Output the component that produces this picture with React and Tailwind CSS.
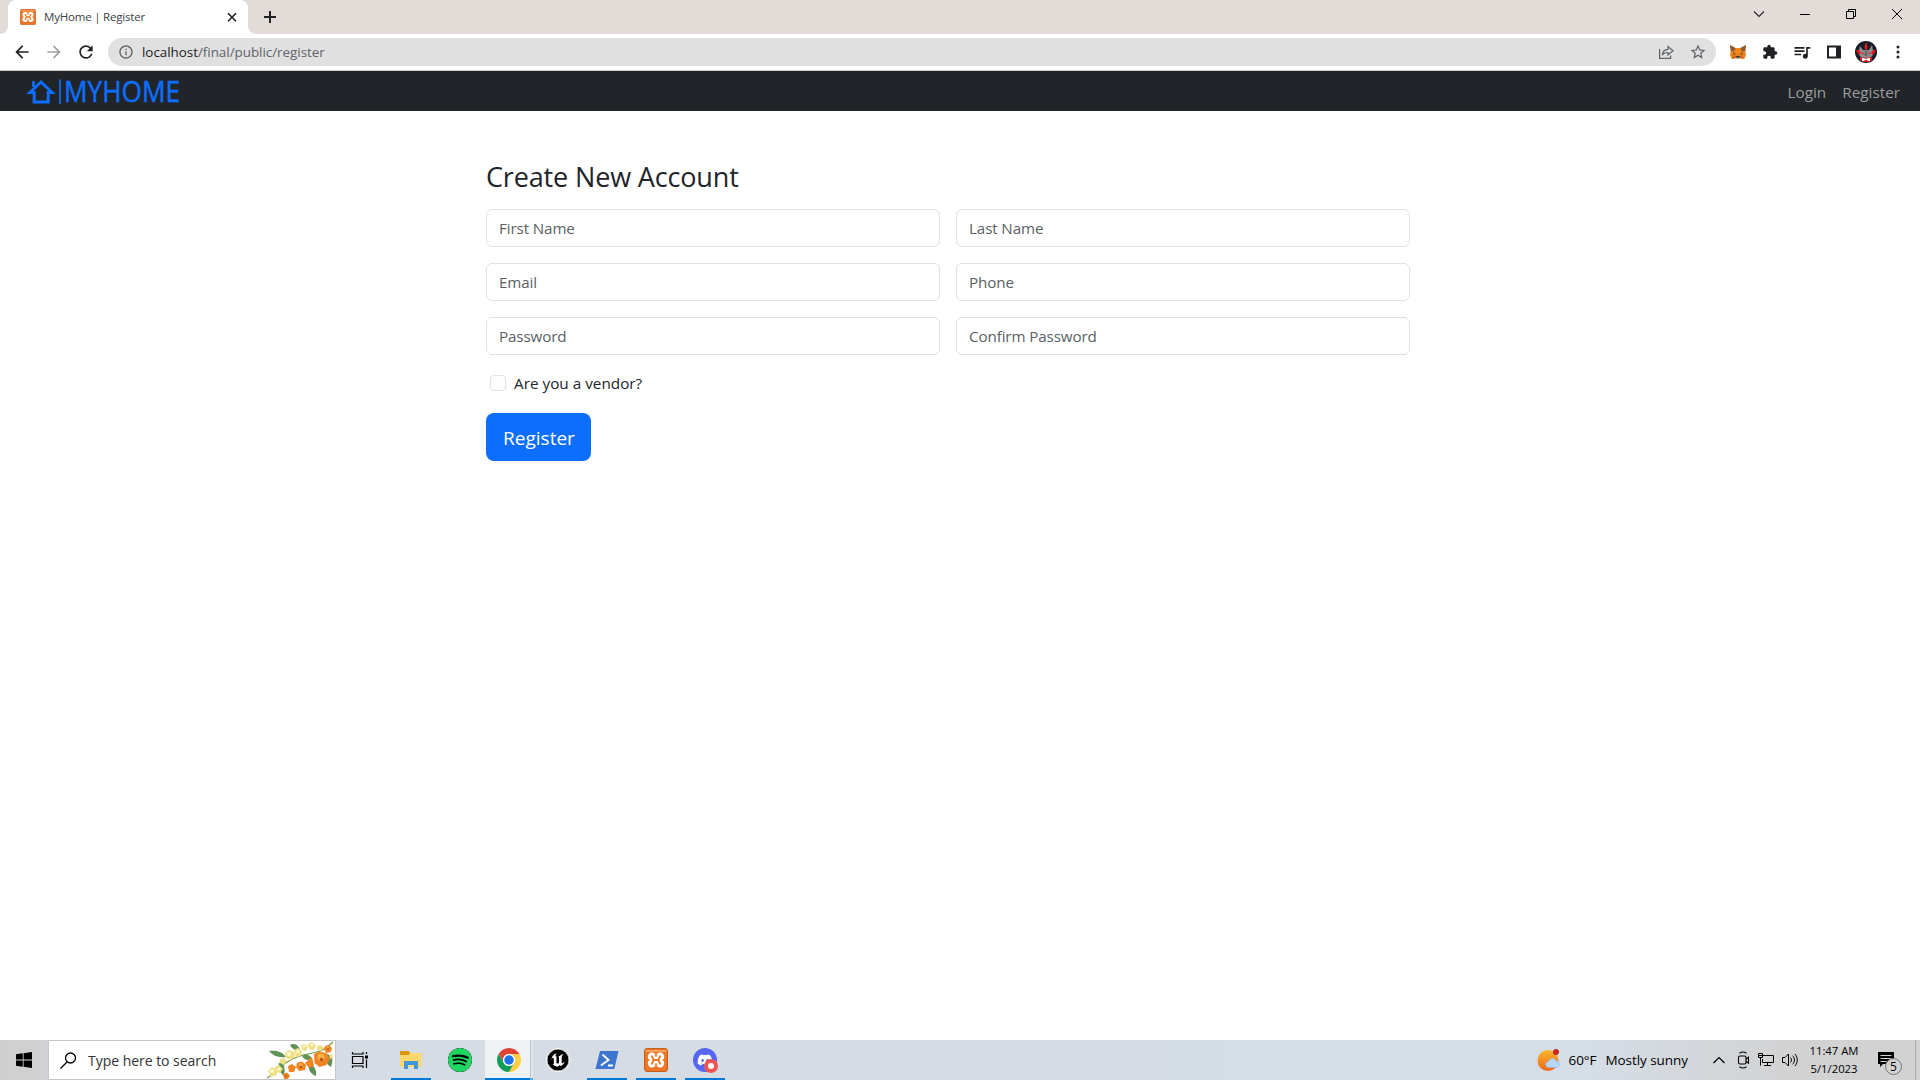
import React, { useState } from 'react';
import { MdArrowBack, MdArrowForward, MdRefresh, MdInfoOutline, MdStarBorder, MdExtension, MdQueueMusic } from 'react-icons/md';
import { FaDiscord } from 'react-icons/fa';
import { SiSpotify, SiUnrealengine } from 'react-icons/si';

const FIELDS = [
  { name: 'first_name', label: 'First Name', type: 'text' },
  { name: 'last_name', label: 'Last Name', type: 'text' },
  { name: 'email', label: 'Email', type: 'email' },
  { name: 'phone', label: 'Phone', type: 'text' },
  { name: 'password', label: 'Password', type: 'password' },
  { name: 'confirm', label: 'Confirm Password', type: 'password' },
];

function XamppIcon({ className }) {
  return (
    <svg className={className} viewBox="0 0 24 24">
      <rect x=".5" y=".5" width="23" height="23" rx="2.500" fill="#ef7623" stroke="#c65d16" />
      <path d="M1.500 2h21v1.800h-21z" fill="#f6a56b" />
      <g fill="#fff">
        <circle cx="8" cy="8.800" r="4.200" />
        <circle cx="16" cy="8.800" r="4.200" />
        <circle cx="8" cy="15.200" r="4.200" />
        <circle cx="16" cy="15.200" r="4.200" />
        <path d="M9 8.500h6v7H9z" />
      </g>
      <path
        d="M8 8.300l1.700 3.700L8 15.700M16 8.300L14.300 12l1.700 3.700M9.700 12h4.600"
        fill="none"
        stroke="#ef7623"
        strokeWidth="1.900"
        strokeLinecap="round"
      />
      <path d="M12 5l1.300 3.600h-2.600zM12 19l1.300-3.600h-2.600zM3.500 10.500L5.700 12l-2.200 1.500zM20.500 10.500L18.300 12l2.200 1.500z" fill="#ef7623" />
    </svg>
  );
}

function TabStrip() {
  return (
    <div className="h-[34px] bg-[#e3dbd8] flex items-end pl-2 shrink-0">
      <div className="relative w-[240px] h-[34px] bg-white rounded-t-lg flex items-center pl-3 pr-2">
        <svg className="absolute -left-2 bottom-0" width="8" height="8">
          <path d="M8 0v8H0a8 8 0 0 0 8-8z" fill="#fff" />
        </svg>
        <svg className="absolute -right-2 bottom-0" width="8" height="8">
          <path d="M0 0v8h8a8 8 0 0 1-8-8z" fill="#fff" />
        </svg>
        <XamppIcon className="w-4 h-4" />
        <span className="ml-2 text-[11.5px] tracking-[-0.2px] text-[#3c4043] whitespace-nowrap">MyHome | Register</span>
        <svg className="ml-auto" width="16" height="16" viewBox="0 0 16 16" stroke="#202124" strokeWidth="1.6">
          <path d="M4 4.200l8 8M12 4.200l-8 8" />
        </svg>
      </div>
      <svg className="ml-[14px] self-center" width="16" height="16" viewBox="0 0 16 16" stroke="#202124" strokeWidth="2">
        <path d="M8 2v12M2 8h12" />
      </svg>
      <div className="ml-auto self-start h-7 flex text-black">
        <svg width="46" height="28" fill="none" stroke="#222" strokeWidth="1.1">
          <path d="M18 11.500l5 5 5-5" />
        </svg>
        <svg width="46" height="28" fill="none" stroke="#000" strokeWidth="1">
          <path d="M18 14.500h10" />
        </svg>
        <svg width="46" height="28" fill="none" stroke="#000" strokeWidth="1">
          <path d="M18.500 11.500h7v7h-7zM20.500 11.500v-2h7v7h-2" />
        </svg>
        <svg width="46" height="28" fill="none" stroke="#000" strokeWidth="1">
          <path d="M18 9l10 10M28 9l-10 10" />
        </svg>
      </div>
    </div>
  );
}

function FoxIcon() {
  return (
    <svg width="16" height="16" viewBox="0 0 16 16">
      <path d="M0 1l5.500 3h5L16 1l-.8 6 .8 4-1.800 4-4-.8-1 .8H6.800l-1-.8-4 .8L0 11l.8-4z" fill="#e8821e" />
      <path d="M0 1l5.500 3L4 7.500.8 7zM16 1l-5.500 3L12 7.500l3.200-.5z" fill="#8e5a34" />
      <path d="M5.500 4h5l-1 6h-3z" fill="#f6851b" />
      <path d="M3 8.500l3 1.500-2.500.8zM13 8.500L10 10l2.500.8z" fill="#6b4a2f" />
      <path d="M1.500 14.500L5 11l1.500 3zM14.500 14.500L11 11l-1.500 3z" fill="#cd6116" />
      <path d="M6.200 12h3.600l-.3 1.700h-3z" fill="#233447" />
      <path d="M6.300 13.700h3.400l-.5 1.300H6.800z" fill="#c0ad9e" />
    </svg>
  );
}

function Avatar() {
  return (
    <svg width="22" height="22" viewBox="0 0 22 22">
      <circle cx="11" cy="11" r="11" fill="#171d28" />
      <path d="M1 9l4 0 2 3-1 3-3-2zM21 9l-4 0-2 3 1 3 3-2z" fill="#e8141b" />
      <path d="M5 5l3 4h6l3-5 1 5-2 3 2 2-3 3H7l-3-3 2-2-2-3z" fill="#8d8c8d" />
      <path d="M11 1l1.500 5-.8 3h-1.400L9.500 6z" fill="#f01820" />
      <path d="M6.500 11l3 1.500-2 .8zM15.500 11l-3 1.500 2 .8z" fill="#f01820" />
      <path d="M10.300 9h1.400l.8 6H9.500z" fill="#656467" />
      <path d="M5 16l2 .5h8l2-.5v3l-3 2H8l-3-2z" fill="#df171c" />
      <path d="M7 17h2l1 .8h2l1-.8h2v3h-2l-1-1h-2l-1 1H7z" fill="#fff" />
    </svg>
  );
}

function Toolbar() {
  return (
    <div className="h-[37px] bg-white border-b border-[#c9c9c7] flex items-center pl-3 pr-3 shrink-0">
      <MdArrowBack className="w-5 h-5 text-[#202124]" />
      <MdArrowForward className="ml-3 w-5 h-5 text-[#a0a1a3]" />
      <MdRefresh className="ml-3 w-5 h-5 text-[#202124]" />
      <div className="ml-3 w-[1608px] h-7 rounded-full bg-[#e0e0e0] flex items-center pl-[10px] pr-[9px]">
        <MdInfoOutline className="w-4 h-4 text-[#5f6368]" />
        <span className="ml-2 text-[13.4px] tracking-[-0.02px] text-[#5f6368] whitespace-nowrap">
          <span className="text-[#202124]">localhost</span>/final/public/register
        </span>
        <svg className="ml-auto" width="16" height="16" viewBox="0 0 16 16" fill="none" stroke="#5f6368" strokeWidth="1.2">
          <path d="M1.600 5v9.400h11V11.500" />
          <path d="M4.500 10.500c.3-3.500 2.300-5 5.500-5.200V2.500l5 4.300-5 4.200V8.500c-2.400 0-4 .5-5.500 2z" />
        </svg>
        <MdStarBorder className="ml-[15px] w-[18px] h-[18px] text-[#5f6368]" />
      </div>
      <div className="ml-auto flex items-center gap-4 text-[#202124]">
        <FoxIcon />
        <MdExtension className="w-4 h-4" />
        <MdQueueMusic className="-mx-[2px] w-5 h-5" />
        <svg width="16" height="16" viewBox="0 0 16 16">
          <path d="M1 1.500h14v13H1zM3 3.500v9h7v-9z" fill="#202124" fillRule="evenodd" />
        </svg>
        <div className="-mx-[3px]">
          <Avatar />
        </div>
        <svg className="mr-[2px]" width="16" height="16" fill="#202124">
          <circle cx="8" cy="3" r="1.500" />
          <circle cx="8" cy="8" r="1.500" />
          <circle cx="8" cy="13" r="1.500" />
        </svg>
      </div>
    </div>
  );
}

function Navbar() {
  return (
    <nav className="h-10 bg-[#212529] flex items-center justify-between pl-7 pr-5 shrink-0">
      <svg className="overflow-visible" width="156" height="40" viewBox="0 0 156 40" fill="none" stroke="#0d6efd">
        <path d="M2 21.500L13 11l11 10.500h-3.800V31H6.200v-9.500z" strokeWidth="3" />
        <path d="M5.500 16v-6" strokeWidth="2.800" />
        <path d="M32 8.500V33" strokeWidth="1.700" />
        <text
          x="36"
          y="31.200"
          fontSize="29"
          fill="#0d6efd"
          strokeWidth=".5"
          textLength="116"
          lengthAdjust="spacingAndGlyphs"
        >
          MYHOME
        </text>
      </svg>
      <div className="flex gap-4 text-[15.3px] leading-[22px] pt-px text-[#9b9d9e]">
        <a href="#login">Login</a>
        <a href="#register">Register</a>
      </div>
    </nav>
  );
}

function RegisterForm() {
  const [vendor, setVendor] = useState(false);

  return (
    <form className="w-[924px] ml-[486px] pt-[49px]" onSubmit={(e) => e.preventDefault()}>
      <h3 className="text-[27px] leading-[34px] tracking-[-0.15px] text-[#212529] mb-[15px]">Create New Account</h3>
      <div className="grid grid-cols-2 gap-4">
        {FIELDS.map((f) => (
          <input
            key={f.name}
            name={f.name}
            type={f.type}
            placeholder={f.label}
            className="h-[38px] rounded-md border border-[#dee2e6] px-3 text-[15.2px] tracking-[-0.12px] placeholder:text-[#595f65]"
          />
        ))}
      </div>
      <label className="mt-4 ml-1 h-6 flex items-center gap-2 text-[15.3px] text-[#212529]">
        <input
          type="checkbox"
          checked={vendor}
          onChange={(e) => setVendor(e.target.checked)}
          className="appearance-none w-4 h-4 rounded border border-[#dee2e6] checked:bg-[#0d6efd]"
        />
        Are you a vendor?
      </label>
      <button type="submit" className="mt-[18px] w-[105px] h-12 pt-[2px] pl-px rounded-lg bg-[#0d6efd] text-white text-[19px]">
        Register
      </button>
    </form>
  );
}

function Flowers() {
  return (
    <svg width="70" height="38" viewBox="0 0 70 38">
      <path d="M2 37C14 30 16 22 32 16S56 14 68 1" fill="none" stroke="#6f9a45" strokeWidth="1.200" />
      <g fill="#5f9256">
        <path d="M4 10c6-1 13 0 17 6-7 1-13-1-17-6z" />
        <path d="M25 4c5-3 9 1 10 5-5 1-8-1-10-5z" />
        <path d="M14 22c4-1 7 4 5 13-4-3-6-8-5-13z" />
        <path d="M44 24c5-1 8 5 7 11-5-2-8-6-7-11z" />
        <path d="M61 14c6-2 8 4 5 12-4-2-6-7-5-12z" />
        <path d="M37 15c5-3 9 0 10 3-4 2-8 1-10-3z" />
      </g>
      <g fill="#efdf84">
        <path d="M20 12l4-3 5 2 1 5-4 3-5-2z" />
        <path d="M29 9l4-2 4 3-1 5-5 1z" />
        <path d="M36 4l4-1 3 3-2 4-4-1z" />
        <path d="M43 3l4-2 4 3-2 5-5-1z" />
        <path d="M52 5l4-1 3 3-3 3-4-1z" />
        <path d="M15 18l4-1 3 3-3 4-4-2z" />
        <path d="M3 30l4-4 5 3 0 5-6 2z" />
        <path d="M10 26l4-2 4 4-3 4-4-1z" />
        <path d="M64 14l3-1 1 4-3 1z" />
      </g>
      <g fill="#fffad0">
        <circle cx="24" cy="13" r="2" />
        <circle cx="33" cy="10.500" r="1.700" />
        <circle cx="47" cy="4" r="1.600" />
        <circle cx="7" cy="30" r="2" />
        <circle cx="39" cy="5.500" r="1.300" />
        <circle cx="14" cy="28" r="1.400" />
      </g>
      <g fill="#f08322">
        <path d="M49 13l6-2.500 7 2 2.500 6-3 5.500-7 2-5-4z" />
        <path d="M40 22l7-6 2 9-5 2z" />
        <path d="M32 22l5-1.500 4 3.500-1 5-6 1-3-4z" />
        <path d="M60 5l4-1 3 3-1 4-5 1-2-4z" />
        <path d="M23 25l4-2 4 3-2 5-5 0z" />
        <path d="M18 33l4-1.500 3 3-2 3.500h-4z" />
      </g>
      <g fill="#f9b04a">
        <circle cx="56" cy="16" r="3.600" />
        <circle cx="36" cy="24" r="1.800" />
        <circle cx="63" cy="7" r="1.500" />
      </g>
      <g fill="#b5541a">
        <circle cx="56.500" cy="18.500" r="1.700" />
        <circle cx="36" cy="26" r="1.200" />
        <circle cx="63" cy="8" r="1" />
        <circle cx="21" cy="35" r="1" />
      </g>
    </svg>
  );
}

function FolderIcon() {
  return (
    <svg width="22" height="20" viewBox="0 0 22 20">
      <path d="M0 1h9l1 2h11v14H0z" fill="#ffcf58" />
      <path d="M0 1h9l1 2-1 2H0z" fill="#d9970f" />
      <path d="M0 5h9l2-2h10.500v14H0z" fill="#ffd76c" />
      <path d="M4 11h14v8h-4v-4H8v4H4z" fill="#3f97dd" />
    </svg>
  );
}

function ChromeIcon() {
  return (
    <svg width="24" height="24" viewBox="0 0 48 48">
      <circle cx="24" cy="24" r="24" fill="#fff" />
      <path d="M24 12h20.780A24 24 0 0 0 3.220 12l10.390 18A12 12 0 0 1 24 12z" fill="#db4437" />
      <path d="M34.390 30L24 48A24 24 0 0 0 44.780 12H24a12 12 0 0 1 10.390 18z" fill="#ffcd40" />
      <path d="M13.610 30L3.220 12A24 24 0 0 0 24 48l10.390-18a12 12 0 0 1-20.780 0z" fill="#0f9d58" />
      <circle cx="24" cy="24" r="12" fill="#fff" />
      <circle cx="24" cy="24" r="9.500" fill="#1a73e8" />
    </svg>
  );
}

function PowerShellIcon() {
  return (
    <svg width="24" height="20" viewBox="0 0 24 20">
      <path d="M5 1h18.500l-4.200 18H.5z" fill="#3d76cf" />
      <path d="M7.500 4.500l6 5.500-7.500 5.500M13 15.500h5" fill="none" stroke="#fff" strokeWidth="1.900" />
    </svg>
  );
}

const APPS = [
  { id: 'explorer', open: true, icon: <FolderIcon /> },
  {
    id: 'spotify',
    open: false,
    icon: (
      <span className="w-6 h-6 rounded-full bg-black overflow-hidden">
        <SiSpotify className="w-6 h-6 text-[#1ed760]" />
      </span>
    ),
  },
  { id: 'chrome', open: true, active: true, icon: <ChromeIcon /> },
  {
    id: 'unreal',
    open: false,
    icon: (
      <span className="w-[22px] h-[22px] rounded-full bg-black flex items-center justify-center ring-1 ring-white/70">
        <SiUnrealengine className="w-[22px] h-[22px] text-white" />
      </span>
    ),
  },
  { id: 'powershell', open: true, icon: <PowerShellIcon /> },
  { id: 'xampp', open: true, icon: <XamppIcon className="w-6 h-6" /> },
  {
    id: 'discord',
    open: true,
    icon: (
      <span className="relative w-6 h-6 rounded-full bg-[#5865f2] flex items-center justify-center">
        <FaDiscord className="w-4 h-4 text-white" />
        <span className="absolute left-[11px] top-[11px] w-[14px] h-[14px] rounded-full bg-[#ed5555] flex items-center justify-center">
          <span className="w-[6px] h-[6px] rounded-full bg-white" />
        </span>
      </span>
    ),
  },
];

function TaskbarApp({ app }) {
  if (app.active) {
    return (
      <div className="w-[49px] h-10 flex">
        <div className="w-[45px] ml-px bg-[#eff2f5] border-b-2 border-[#0078d7] flex items-center justify-center pl-[3px] pt-[2px]">
          {app.icon}
        </div>
        <div className="w-[3px] bg-[#e3e8ed] border-l border-l-[#b9c1c9] border-b-2 border-b-[#5ba4de]" />
      </div>
    );
  }
  return (
    <div className="w-[49px] h-10 flex flex-col items-center">
      <div className="h-[38px] pt-[2px] flex items-center justify-center">{app.icon}</div>
      {app.open && <div className="w-10 h-[2px] bg-[#0078d7]" />}
    </div>
  );
}

function Tray() {
  return (
    <div className="ml-auto flex items-center h-10 text-black">
      <svg width="24" height="24" viewBox="0 0 24 24">
        <defs>
          <linearGradient id="sun" x1="0" y1="0" x2="0" y2="1">
            <stop offset="0" stopColor="#f9b52c" />
            <stop offset="1" stopColor="#f0681c" />
          </linearGradient>
        </defs>
        <circle cx="11" cy="12.500" r="10.500" fill="url(#sun)" />
        <path d="M12 19.500a3 3 0 0 1-.5-6 4.200 4.200 0 0 1 7.800-.5 3.300 3.300 0 0 1 .7 6.500z" fill="#b9d6fb" stroke="#8fb7ec" strokeWidth=".5" />
        <circle cx="19" cy="4" r="3" fill="#c9281f" />
      </svg>
      <span className="ml-2 text-[13.5px] tracking-[-0.1px] whitespace-nowrap">60°F</span>
      <span className="ml-[9px] text-[13.5px] tracking-[-0.05px] whitespace-nowrap">Mostly sunny</span>
      <svg className="ml-[24px]" width="14" height="14" fill="none" stroke="#000" strokeWidth="1.200">
        <path d="M1.500 10L7 4.500l5.500 5.500" />
      </svg>
      <svg className="ml-[11px]" width="14" height="18" viewBox="0 0 14 18" fill="none" stroke="#000" strokeWidth="1.100">
        <rect x="1.500" y="5" width="7.500" height="8" rx="1.500" />
        <path d="M9 8.200l2.500-2v6l-2.500-2M2.500 2.300c2-1.500 5-1.500 7 0M2.500 15.700c2 1.500 5 1.500 7 0" />
      </svg>
      <svg className="ml-[6px]" width="18" height="16" viewBox="0 0 18 16" fill="none" stroke="#000" strokeWidth="1">
        <path d="M6 3.500h10.500v7h-11V7M10.500 10.500v3M7 13.500h7M1.500 1.500h4v4h-4zM3.500 5.500v8M1 3.500h4" />
      </svg>
      <svg className="ml-[6px]" width="18" height="16" viewBox="0 0 18 16" fill="none" stroke="#000" strokeWidth="1">
        <path d="M1.500 5.500h2.500l3.500-3.500v12L4 10.500H1.500zM9.500 5.500c1.300 1.500 1.300 3.500 0 5M11.700 3.700c2.300 2.500 2.300 6.100 0 8.600M14 2c3 3.500 3 8.500 0 12" />
      </svg>
      <div className="w-[70px] text-center text-[11.3px] leading-[18px] whitespace-nowrap">
        <div>11:47 AM</div>
        <div>5/1/2023</div>
      </div>
      <div className="relative ml-[8px] w-[38px] h-10 shrink-0">
        <svg className="absolute left-0 top-[11px]" width="18" height="18">
          <path d="M1 1h16v12H6l-3 3v-3H1z" fill="#000" />
          <path d="M3.500 4.500h11M3.500 7.500h11M3.500 10.500h6" stroke="#d2d2d2" strokeWidth="1" />
        </svg>
        <span className="absolute left-[8px] top-[18px] w-[17px] h-[17px] rounded-full border border-[#777] bg-[#d2d2d2] flex items-center justify-center text-[12px]">
          5
        </span>
      </div>
      <div className="w-[5px] h-10 border-l border-[#a8a8a8]" />
    </div>
  );
}

function Taskbar() {
  return (
    <div className="h-10 shrink-0 flex items-center bg-[linear-gradient(90deg,#cfcfcf_0%,#d1d2d4_3%,#d5dce4_18%,#d5dce3_50%,#d5dee7_82%,#d3d5d8_90%,#d2d2d2_94%)]">
      <div className="w-12 flex justify-center">
        <svg width="16" height="16" viewBox="0 0 16 16">
          <path d="M0 2.300l6.800-1v6.300H0zM7.600 1.200L16 0v7.600H7.600zM0 8.400h6.800v6.300l-6.800-1zM7.600 8.400H16V16l-8.400-1.200z" />
        </svg>
      </div>
      <div className="w-[288px] h-10 bg-white border border-[#c6c6c6] flex items-center pl-[11px]">
        <svg width="17" height="17" viewBox="0 0 17 17" fill="none" stroke="#000" strokeWidth="1.300">
          <circle cx="10.500" cy="6" r="5" />
          <path d="M7 10l-6.500 6.500" />
        </svg>
        <span className="ml-[11px] text-[14px] tracking-[-0.03px] text-[#333] whitespace-nowrap">Type here to search</span>
        <div className="ml-auto">
          <Flowers />
        </div>
      </div>
      <div className="w-[50px] flex justify-center pr-[3px]">
        <svg width="18" height="16" viewBox="0 0 18 16" fill="none" stroke="#000" strokeWidth="1.200">
          <path d="M1.500 4.500h10.500v7H1.500zM1.500 0v2h10.500V0M1.500 16v-2h10.500v2M15.500 0v2M15.500 7.500V16" />
          <path d="M14 3.500h3v3h-3z" fill="#000" stroke="none" />
        </svg>
      </div>
      {APPS.map((app) => (
        <TaskbarApp key={app.id} app={app} />
      ))}
      <Tray />
    </div>
  );
}

function App() {
  return (
    <div className="w-full h-screen flex flex-col bg-white overflow-hidden font-['Open_Sans',sans-serif]">
      <TabStrip />
      <Toolbar />
      <Navbar />
      <main className="flex-1">
        <RegisterForm />
      </main>
      <Taskbar />
    </div>
  );
}

export default App;
